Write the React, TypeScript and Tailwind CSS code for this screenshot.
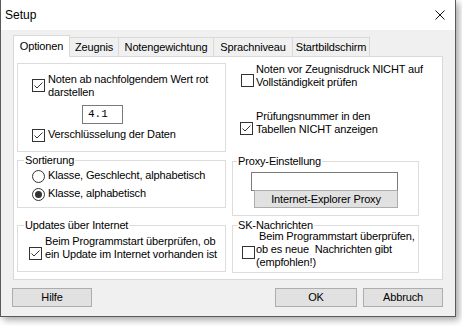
import React from "react";

const Check = ({ checked, className = "" }: { checked?: boolean; className?: string }) => (
  <div
    className={`w-[13px] h-[13px] shrink-0 border border-[#333333] bg-white flex items-center justify-center ${className}`}
  >
    {checked && (
      <svg width="11" height="11" viewBox="0 0 11 11">
        <polyline points="1.5,5.5 4,8 9.5,2.5" fill="none" stroke="#333333" strokeWidth="1" />
      </svg>
    )}
  </div>
);

const Radio = ({ checked, className = "" }: { checked?: boolean; className?: string }) => (
  <div
    className={`w-[13px] h-[13px] shrink-0 rounded-full border border-[#333333] bg-white flex items-center justify-center ${className}`}
  >
    {checked && <div className="w-[7px] h-[7px] rounded-full bg-[#333333]" />}
  </div>
);

interface GroupProps {
  title: string;
  className?: string;
  legendClass?: string;
  children: React.ReactNode;
}

const Group = ({ title, className = "", legendClass = "ml-[6px]", children }: GroupProps) => (
  <fieldset className={`border border-[#dcdcdc] ${className}`}>
    <legend className={`px-[1px] leading-[14px] whitespace-nowrap ${legendClass}`}>{title}</legend>
    {children}
  </fieldset>
);

const tabs = [
  { label: "Zeugnis", w: "w-[50px]" },
  { label: "Notengewichtung", w: "w-[96px]" },
  { label: "Sprachniveau", w: "w-[80px]" },
  { label: "Startbildschirm", w: "w-[78px]" },
];

export default function App() {
  return (
    <div className="w-[462px] h-[326px] bg-white font-['Liberation_Sans',Arial,sans-serif] text-[11px] tracking-[-0.15px] text-black">
      <div className="w-[456px] h-[317px] border-x border-b border-[#5a5a5a] bg-[#f0f0f0] shadow-[3px_3px_7px_rgba(0,0,0,0.35)] flex flex-col">
        {/* title bar */}
        <div className="h-[30px] shrink-0 bg-white flex items-center justify-between pl-[4px] pr-[10px]">
          <span className="text-[12px] tracking-normal">Setup</span>
          <svg width="10" height="10" viewBox="0 0 10 10">
            <path d="M0.5 0.5 L9.5 9.5 M9.5 0.5 L0.5 9.5" stroke="#111111" strokeWidth="1" fill="none" />
          </svg>
        </div>

        {/* tabs */}
        <div className="mt-[5px] h-[21px] shrink-0 pl-[12px] flex items-end">
          <div className="w-[57px] h-[22px] -mb-px relative z-10 bg-white border border-b-0 border-[#d9d9d9] flex items-center justify-center">
            Optionen
          </div>
          {tabs.map((t) => (
            <div
              key={t.label}
              className={`${t.w} h-[19px] -ml-px border border-b-0 border-[#d9d9d9] bg-[#f0f0f0] flex items-center justify-center whitespace-nowrap`}
            >
              {t.label}
            </div>
          ))}
        </div>

        {/* panel */}
        <div className="ml-[12px] w-[430px] h-[224px] shrink-0 bg-white border border-[#d9d9d9] flex items-start pt-[6px] pl-[3px] whitespace-nowrap">
          {/* left column */}
          <div className="w-[209px] shrink-0 flex flex-col">
            <div className="h-[89px] border border-[#dcdcdc] pt-[9px] pl-[14px]">
              <div className="flex items-start">
                <Check checked className="mt-[6px]" />
                <div className="ml-[3px] leading-[13px]">
                  Noten ab nachfolgendem Wert rot
                  <br />
                  darstellen
                </div>
              </div>
              <div className="mt-[6px] ml-[50px] w-[41px] h-[19px] border border-[#7a7a7a] pl-[5px] flex items-center font-['Liberation_Mono',monospace] text-[11px] tracking-normal">
                4.1
              </div>
              <div className="mt-[4px] flex items-start">
                <Check checked className="mt-[1px]" />
                <div className="ml-[3px] leading-[13px]">Verschlüsselung der Daten</div>
              </div>
            </div>

            <Group title="Sortierung" className="mt-[1px] h-[55px]">
              <div className="pl-[14px]">
                <div className="mt-[2px] flex items-start">
                  <Radio className="mt-[1px]" />
                  <div className="ml-[3px] leading-[13px]">Klasse, Geschlecht, alphabetisch</div>
                </div>
                <div className="mt-[4px] flex items-start">
                  <Radio checked className="mt-[1px]" />
                  <div className="ml-[3px] leading-[13px]">Klasse, alphabetisch</div>
                </div>
              </div>
            </Group>

            <Group title="Updates über Internet" className="mt-[10px] h-[54px]">
              <div className="mt-[3px] pl-[11px] flex items-start">
                <Check checked className="mt-[12px]" />
                <div className="ml-[3px] leading-[13px]">
                  Beim Programmstart überprüfen, ob
                  <br />
                  ein Update im Internet vorhanden ist
                </div>
              </div>
            </Group>
          </div>

          {/* right column */}
          <div className="ml-[6px] w-[187px] shrink-0 flex flex-col">
            <div className="pl-[9px] flex items-start">
              <Check className="mt-[11px]" />
              <div className="ml-[2px] leading-[13px]">
                Noten vor Zeugnisdruck NICHT auf
                <br />
                Vollständigkeit prüfen
              </div>
            </div>
            <div className="mt-[21px] pl-[8px] flex items-start">
              <Check checked className="mt-[12px]" />
              <div className="ml-[3px] leading-[13px]">
                Prüfungsnummer in den
                <br />
                Tabellen NICHT anzeigen
              </div>
            </div>

            <Group title="Proxy-Einstellung" legendClass="ml-[4px]" className="mt-[18px] h-[62px]">
              <div className="mt-[4px] ml-[18px] w-[147px] h-[19px] border border-[#7a7a7a] bg-white" />
              <div className="-mt-px ml-[21px] w-[144px] h-[18px] relative bg-[#e1e1e1] border border-[#adadad] flex items-center justify-center">
                Internet-Explorer Proxy
              </div>
            </Group>

            <Group title="SK-Nachrichten" legendClass="ml-[4px]" className="mt-[2px] h-[55px]">
              <div className="-mt-[2px] pl-[9px] flex items-start">
                <Check className="mt-[16px]" />
                <div className="ml-[1px] leading-[13px]">
                  <span className="pl-[3px]">Beim Programmstart überprüfen,</span>
                  <br />
                  ob es neue&nbsp; Nachrichten gibt
                  <br />
                  (empfohlen!)
                </div>
              </div>
            </Group>
          </div>
        </div>

        {/* bottom buttons */}
        <div className="mt-[8px] pl-[11px] pr-[12px] flex">
          <div className="w-[80px] h-[19px] bg-[#e1e1e1] border border-[#adadad] flex items-center justify-center">
            Hilfe
          </div>
          <div className="ml-auto w-[82px] h-[19px] bg-[#e1e1e1] border border-[#adadad] flex items-center justify-center">
            OK
          </div>
          <div className="ml-[6px] w-[80px] h-[19px] bg-[#e1e1e1] border border-[#adadad] flex items-center justify-center">
            Abbruch
          </div>
        </div>
      </div>
    </div>
  );
}
